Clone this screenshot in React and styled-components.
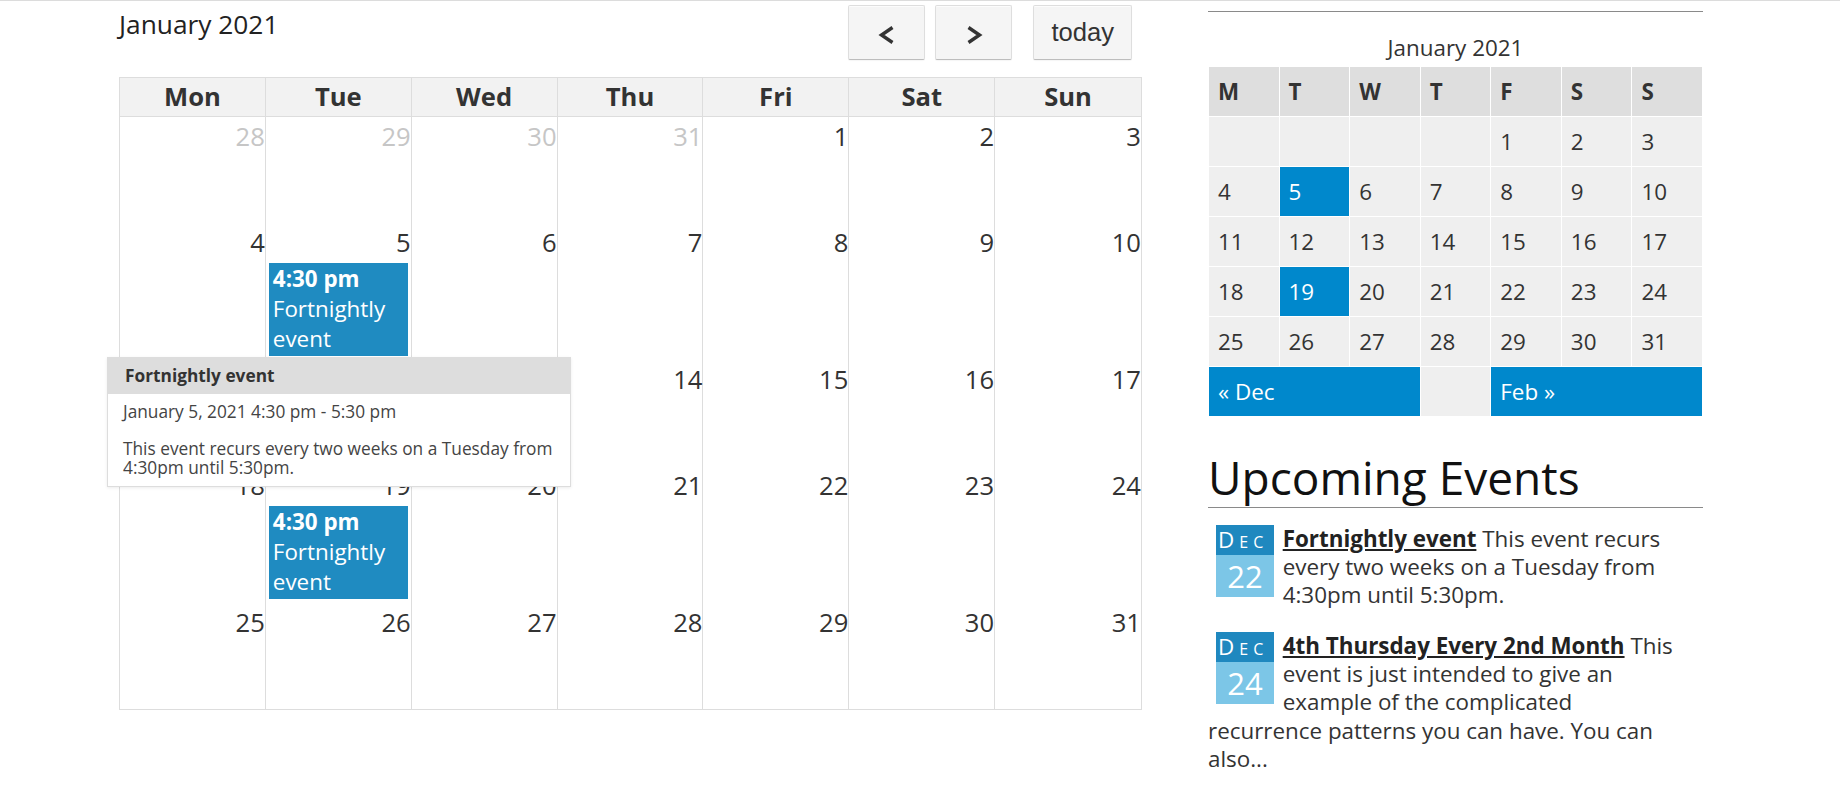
import React from "react";
import styled, { createGlobalStyle } from "styled-components";

const GlobalStyle = createGlobalStyle`
  html, body {
    margin: 0;
    padding: 0;
    background: #fff;
  }
  body {
    font-family: "Open Sans", "Noto Sans", sans-serif;
    color: #333;
  }
`;

const Page = styled.div`
  display: flex;
  align-items: flex-start;
  gap: 66px;
  padding-left: 119px;
  border-top: 1px solid #dcdcdc;
  min-height: 787px;
`;

/* ---------- main calendar ---------- */

const Main = styled.div`
  position: relative;
  width: 1023px;
  flex: none;
`;

const Toolbar = styled.div`
  display: flex;
  justify-content: space-between;
  align-items: flex-start;
  height: 76px;
`;

const Title = styled.h2`
  margin: 8px 0 0;
  font-size: 26.3px;
  font-weight: 400;
  line-height: 1.2;
  color: #222;
`;

const Buttons = styled.div`
  display: flex;
  gap: 10px;
  margin: 4px 10px 0 0;
`;

const Button = styled.button`
  box-sizing: border-box;
  height: 55px;
  width: ${(p) => (p.$wide ? "auto" : "77px")};
  padding: ${(p) => (p.$wide ? "0 17px" : "4px 0 0")};
  margin-left: ${(p) => (p.$wide ? "11px" : "0")};
  display: flex;
  align-items: center;
  justify-content: center;
  background: #f5f5f5;
  border: 1px solid #dedede;
  border-bottom-color: #bdbdbd;
  border-radius: 2px;
  box-shadow: inset 0 1px 0 rgba(255, 255, 255, 0.7), 0 1px 1px rgba(0, 0, 0, 0.04);
  font-family: "Liberation Sans", Arial, sans-serif;
  font-size: 25.6px;
  color: #333;
  cursor: pointer;
`;

const Table = styled.div`
  border: 1px solid #ddd;
`;

const HeadRow = styled.div`
  display: grid;
  grid-template-columns: repeat(7, 1fr);
  background: #f2f2f2;
  border-bottom: 1px solid #ddd;
`;

const HeadCell = styled.div`
  height: 38px;
  line-height: 38px;
  text-align: center;
  font-size: 25.6px;
  font-weight: 700;
  color: #333;
  border-right: 1px solid #ddd;
  &:last-child {
    border-right: 0;
  }
`;

const WeekRow = styled.div`
  display: grid;
  grid-template-columns: repeat(7, 1fr);
  min-height: 105.5px;
`;

const DayCell = styled.div`
  border-right: 1px solid #ddd;
  &:last-child {
    border-right: 0;
  }
`;

const DayNum = styled.div`
  padding: 5px 0 0;
  text-align: right;
  font-size: 25.6px;
  line-height: 30.7px;
  color: ${(p) => (p.$other ? "#c6c6c6" : "#333")};
`;

const Event = styled.div`
  margin: 5px 3px 4px;
  padding: 1px 4px 2px;
  background: #1f8bc1;
  color: #fff;
  font-size: 22.4px;
  line-height: 30px;
  cursor: pointer;
`;

const EventTime = styled.div`
  font-weight: 700;
`;

const Popup = styled.div`
  position: absolute;
  left: -12px;
  top: 356px;
  width: 464px;
  box-sizing: border-box;
  background: #fff;
  border: 1px solid #ddd;
  box-shadow: 0 1px 3px rgba(0, 0, 0, 0.08);
  z-index: 5;
`;

const PopupHead = styled.div`
  height: 36px;
  line-height: 36px;
  padding: 0 17px;
  background: #ddd;
  font-size: 17.3px;
  font-weight: 700;
  color: #333;
`;

const PopupBody = styled.div`
  padding: 8.5px 12px 9px 15px;
  font-size: 17.3px;
  line-height: 18.7px;
  color: #444;
`;

const PopupLine = styled.p`
  margin: 0 0 ${(p) => (p.$gap ? "18.7px" : "0")};
`;

/* ---------- sidebar ---------- */

const Sidebar = styled.aside`
  width: 495px;
  flex: none;
`;

const Rule = styled.div`
  margin-top: 10px;
  border-top: 1px solid #8a8a8a;
`;

const MiniCaption = styled.div`
  margin: 22.5px 0 5.3px;
  text-align: center;
  font-size: 22.4px;
  line-height: 26.9px;
  color: #333;
`;

const MiniGrid = styled.div`
  display: grid;
  grid-template-columns: repeat(7, 1fr);
  grid-auto-rows: 49px;
  gap: 1px;
  margin: 0 1px;
`;

const miniBg = {
  head: "#dedede",
  day: "#efefef",
  active: "#0088cc",
  nav: "#0088cc",
};

const MiniCell = styled.div`
  grid-column: span ${(p) => p.$span || 1};
  padding-left: 9px;
  line-height: 49px;
  font-size: 22.4px;
  font-weight: ${(p) => (p.$kind === "head" ? 700 : 400)};
  background: ${(p) => miniBg[p.$kind]};
  color: ${(p) => (p.$kind === "active" || p.$kind === "nav" ? "#fff" : "#333")};
`;

const Heading = styled.h2`
  margin: 34px 0 0;
  padding-bottom: 2px;
  border-bottom: 1px solid #8a8a8a;
  font-size: 46px;
  font-weight: 400;
  line-height: 1.2;
  color: #111;
`;

const List = styled.ul`
  list-style: none;
  margin: 17px 0 0;
  padding: 0 12px 0 0;
`;

const Item = styled.li`
  display: flow-root;
  margin-bottom: 22px;
  font-size: 22.4px;
  line-height: 28.3px;
  color: #333;
`;

const Badge = styled.div`
  float: left;
  width: 58px;
  margin: 0 8.7px 4px 8px;
  color: #fff;
`;

const BadgeMonth = styled.div`
  height: 30px;
  line-height: 30px;
  padding-left: 2px;
  background: #1f88bf;
  font-size: 22.4px;
  font-variant: small-caps;
  letter-spacing: 5px;
  white-space: nowrap;
  overflow: hidden;
`;

const BadgeDay = styled.div`
  height: 42px;
  line-height: 42px;
  text-align: center;
  background: #7cc6e7;
  font-size: 31px;
`;

const ItemTitle = styled.a`
  font-weight: 700;
  color: #222;
  text-decoration: underline;
`;

const Chevron = ({ dir }) => (
  <svg width="16" height="18" viewBox="0 0 16 18" overflow="visible" aria-hidden="true">
    <polyline
      points={dir === "left" ? "13.5,1.5 2.5,9 13.5,16.5" : "2.5,1.5 13.5,9 2.5,16.5"}
      fill="none"
      stroke="#333"
      strokeWidth="3.4"
    />
  </svg>
);

const dayNames = ["Mon", "Tue", "Wed", "Thu", "Fri", "Sat", "Sun"];

const weeks = [
  [
    { n: 28, other: true },
    { n: 29, other: true },
    { n: 30, other: true },
    { n: 31, other: true },
    { n: 1 },
    { n: 2 },
    { n: 3 },
  ],
  [4, 5, 6, 7, 8, 9, 10].map((n) => ({ n, event: n === 5 })),
  [11, 12, 13, 14, 15, 16, 17].map((n) => ({ n })),
  [18, 19, 20, 21, 22, 23, 24].map((n) => ({ n, event: n === 19 })),
  [25, 26, 27, 28, 29, 30, 31].map((n) => ({ n })),
];

const miniHead = ["M", "T", "W", "T", "F", "S", "S"];
const miniWeeks = [
  ["", "", "", "", 1, 2, 3],
  [4, 5, 6, 7, 8, 9, 10],
  [11, 12, 13, 14, 15, 16, 17],
  [18, 19, 20, 21, 22, 23, 24],
  [25, 26, 27, 28, 29, 30, 31],
];

const upcoming = [
  {
    day: 22,
    title: "Fortnightly event",
    text: "This event recurs every two weeks on a Tuesday from 4:30pm until 5:30pm.",
  },
  {
    day: 24,
    title: "4th Thursday Every 2nd Month",
    text: "This event is just intended to give an example of the complicated recurrence patterns you can have. You can also...",
  },
];

export default function App() {
  return (
    <>
      <GlobalStyle />
      <Page>
        <Main>
          <Toolbar>
            <Title>January 2021</Title>
            <Buttons>
              <Button aria-label="prev">
                <Chevron dir="left" />
              </Button>
              <Button aria-label="next">
                <Chevron dir="right" />
              </Button>
              <Button $wide>today</Button>
            </Buttons>
          </Toolbar>

          <Table>
            <HeadRow>
              {dayNames.map((d) => (
                <HeadCell key={d}>{d}</HeadCell>
              ))}
            </HeadRow>
            {weeks.map((week, i) => (
              <WeekRow key={i}>
                {week.map((day) => (
                  <DayCell key={day.n}>
                    <DayNum $other={day.other}>{day.n}</DayNum>
                    {day.event && (
                      <Event>
                        <EventTime>4:30 pm</EventTime>
                        Fortnightly event
                      </Event>
                    )}
                  </DayCell>
                ))}
              </WeekRow>
            ))}
          </Table>

          <Popup>
            <PopupHead>Fortnightly event</PopupHead>
            <PopupBody>
              <PopupLine $gap>January 5, 2021 4:30 pm - 5:30 pm</PopupLine>
              <PopupLine>
                This event recurs every two weeks on a Tuesday from 4:30pm until
                5:30pm.
              </PopupLine>
            </PopupBody>
          </Popup>
        </Main>

        <Sidebar>
          <Rule />
          <MiniCaption>January 2021</MiniCaption>
          <MiniGrid>
            {miniHead.map((d, i) => (
              <MiniCell key={"h" + i} $kind="head">
                {d}
              </MiniCell>
            ))}
            {miniWeeks.flat().map((n, i) => (
              <MiniCell key={"d" + i} $kind={n === 5 || n === 19 ? "active" : "day"}>
                {n}
              </MiniCell>
            ))}
            <MiniCell $kind="nav" $span={3}>
              « Dec
            </MiniCell>
            <MiniCell $kind="day" />
            <MiniCell $kind="nav" $span={3}>
              Feb »
            </MiniCell>
          </MiniGrid>

          <Heading>Upcoming Events</Heading>
          <List>
            {upcoming.map((ev) => (
              <Item key={ev.day}>
                <Badge>
                  <BadgeMonth>Dec</BadgeMonth>
                  <BadgeDay>{ev.day}</BadgeDay>
                </Badge>
                <ItemTitle href="#">{ev.title}</ItemTitle> {ev.text}
              </Item>
            ))}
          </List>
        </Sidebar>
      </Page>
    </>
  );
}
